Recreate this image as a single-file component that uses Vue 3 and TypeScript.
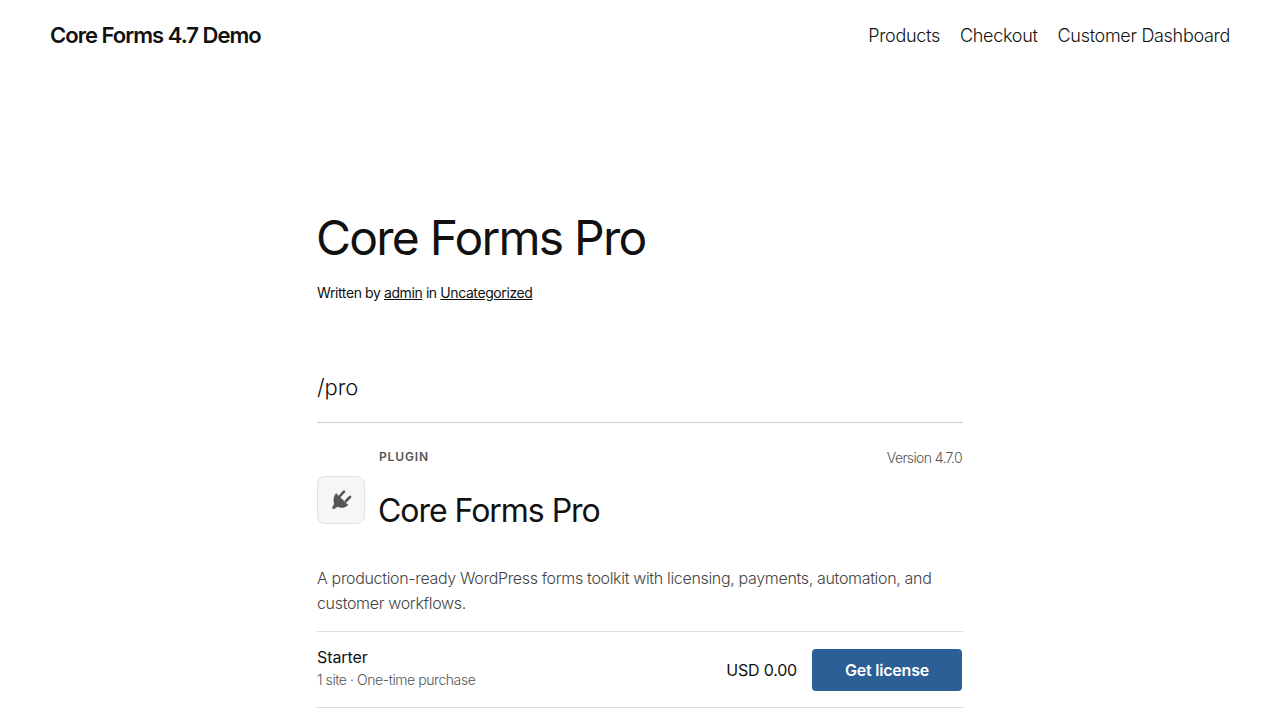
<script setup lang="ts">
const nav: string[] = ['Products', 'Checkout', 'Customer Dashboard']
</script>

<template>
  <div class="page">
    <header class="top">
      <div class="brand">Core Forms 4.7 Demo</div>
      <nav class="nav"><a v-for="n in nav" :key="n">{{ n }}</a></nav>
    </header>
    <main class="main">
      <h1 class="title">Core Forms Pro</h1>
      <p class="meta">Written by <a>admin</a> in <a>Uncategorized</a></p>
      <p class="slug">/pro</p>
      <section class="card">
        <div class="head">
          <div class="icon">
            <svg viewBox="0 0 24 24" width="24" height="24" fill="#555" stroke="#555">
              <path stroke-width="0.6" stroke-linejoin="round" d="M7 5.5 19 17Q14.5 21 8.5 18.6L4.6 21 3.3 19.8 5.3 16.2Q3.6 10 7 5.5Z" />
              <path fill="none" stroke-width="2.6" stroke-linecap="round" d="M11 8 15 3.6M17 13 21 9" />
            </svg>
          </div>
          <div class="names">
            <div class="kicker">PLUGIN</div>
            <h2 class="name">Core Forms Pro</h2>
          </div>
          <div class="version">Version 4.7.0</div>
        </div>
        <p class="desc">A production-ready WordPress forms toolkit with licensing, payments, automation, and customer workflows.</p>
        <div class="row">
          <div class="plan-info">
            <div class="plan">Starter</div>
            <div class="sub">1 site · One-time purchase</div>
          </div>
          <div class="buy">
            <span class="price">USD 0.00</span>
            <button class="btn">Get license</button>
          </div>
        </div>
      </section>
    </main>
  </div>
</template>

<style>
html, body { margin: 0; background: #fff; overflow: hidden; }
</style>

<style scoped>
.page { height: 720px; overflow: hidden; font-family: Inter, "Noto Sans", sans-serif; color: #111; background: #fff; }
.top { display: flex; justify-content: space-between; align-items: center; height: 70px; padding: 0 50px; }
.brand { font-size: 22px; font-weight: 600; letter-spacing: -0.97px; }
.nav { display: flex; gap: 20px; font-size: 18px; font-weight: 300; letter-spacing: -0.3px; }
.main { width: 646px; margin: 0 auto; padding-top: 137px; }
.title { margin: 0 0 0 -1px; font-size: 48px; line-height: 62px; font-weight: 400; letter-spacing: -1.77px; }
.meta { margin: 13px 0 0; font-size: 14px; line-height: 22px; letter-spacing: -0.4px; }
.meta a { text-decoration: underline; }
.slug { margin: 68px 0 0; font-size: 22px; line-height: 30px; font-weight: 300; letter-spacing: -0.05px; }
.card { margin-top: 20px; border-top: 1px solid #ccc; }
.head { display: flex; align-items: flex-start; padding-top: 26px; }
.icon { width: 46px; height: 46px; margin-top: 27px; margin-right: 14px; display: flex; align-items: center; justify-content: center; background: #f6f6f6; border: 1px solid #e2e2e2; border-radius: 8px; }
.names { flex: 1; }
.kicker { font-size: 12px; line-height: 16px; font-weight: 600; letter-spacing: 0.85px; color: #555; }
.name { margin: 26px 0 0 -1px; font-size: 32px; line-height: 40px; font-weight: 400; letter-spacing: -1.03px; }
.version { margin-right: 1px; font-size: 14px; line-height: 18px; font-weight: 300; color: #555; letter-spacing: -0.62px; }
.desc { margin: 35px 0 0; font-size: 16px; line-height: 25px; font-weight: 300; color: #444; letter-spacing: -0.33px; }
.row { display: flex; justify-content: space-between; align-items: center; margin-top: 15px; padding: 15px 0; border-top: 1px solid #ddd; border-bottom: 1px solid #ddd; }
.plan-info { padding-bottom: 2px; }
.plan { font-size: 16px; line-height: 20px; letter-spacing: -0.1px; }
.sub { margin-top: 3px; font-size: 14px; line-height: 20px; font-weight: 300; color: #555; letter-spacing: -0.43px; }
.buy { display: flex; align-items: center; gap: 15px; margin-right: 1px; }
.price { font-size: 16px; letter-spacing: -0.2px; }
.btn { width: 150px; height: 42px; border: 0; border-radius: 4px; background: #2b5f95; color: #fff; font: 600 16px Inter, sans-serif; letter-spacing: -0.2px; }
</style>
